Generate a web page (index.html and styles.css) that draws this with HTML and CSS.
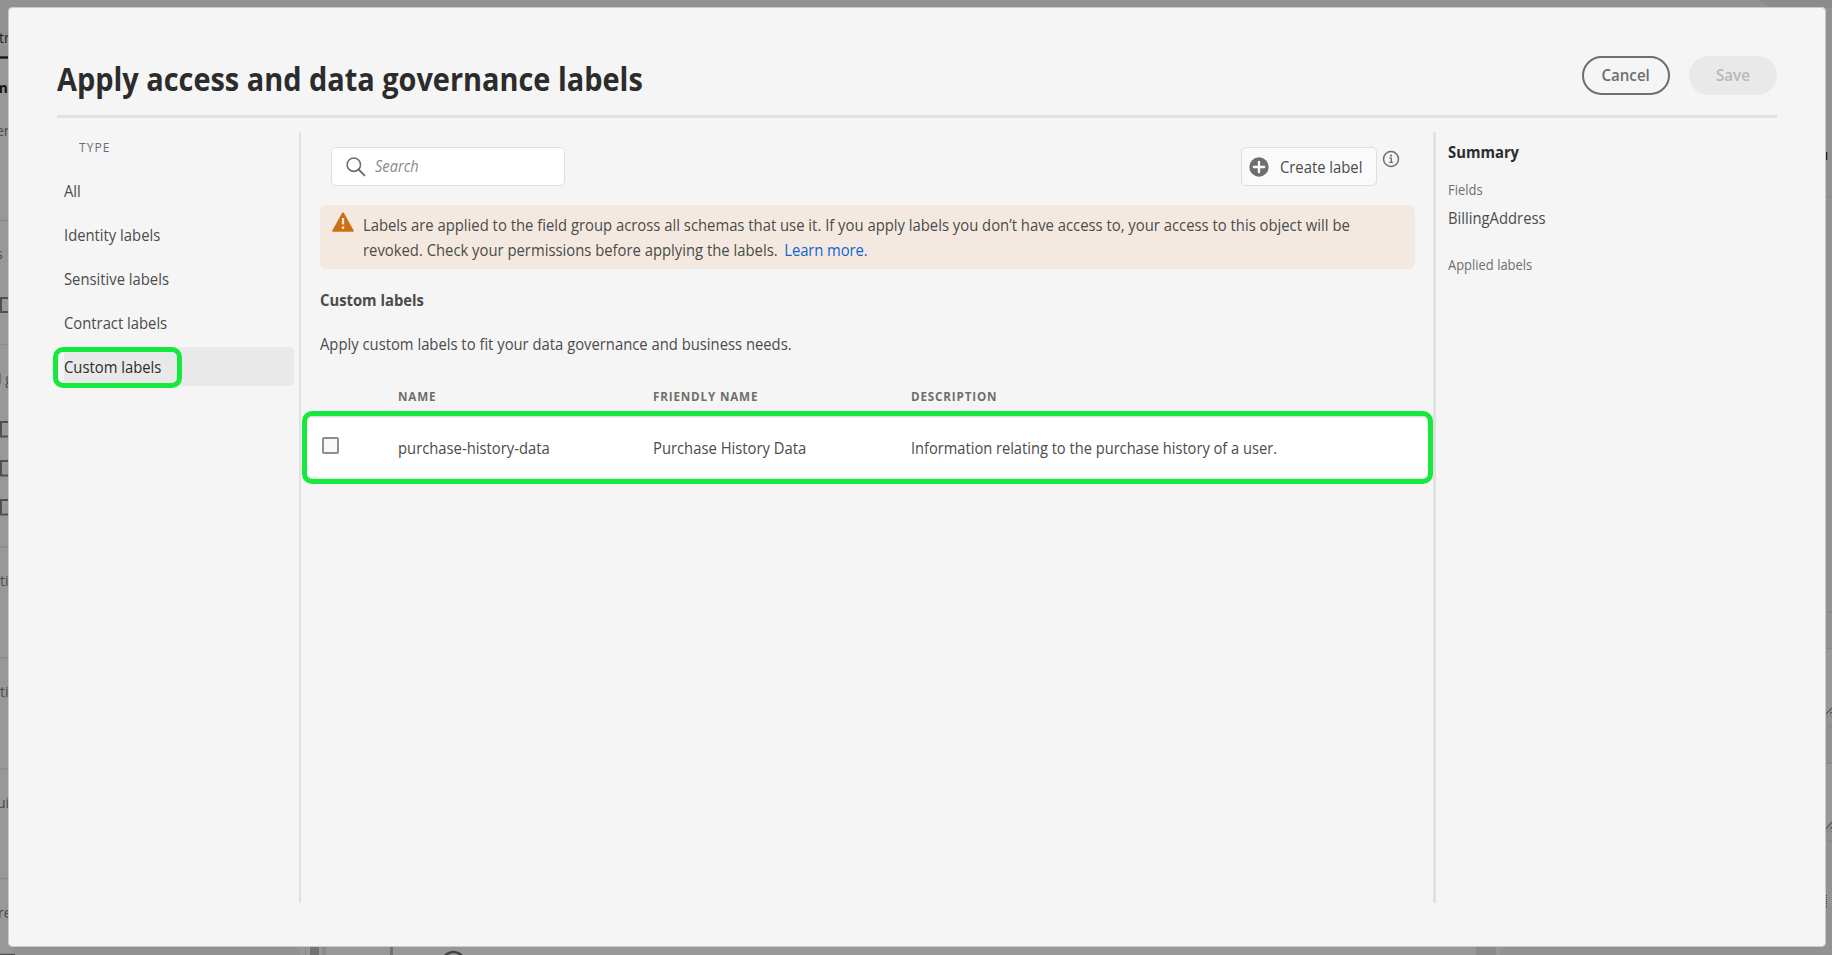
FILE: index.html
```
<!DOCTYPE html>
<html lang="en">
<head>
<meta charset="utf-8">
<title>Apply access and data governance labels</title>
<link rel="stylesheet" href="styles.css">
</head>
<body>
<!-- Dimmed page behind the dialog -->
<svg class="backdrop" width="1832" height="955" viewBox="0 0 1832 955" aria-hidden="true">
  <rect width="1832" height="955" fill="#929292"/>
  <rect y="58" width="12" height="897" fill="#989898"/>
  <rect y="940" x="300" width="1200" height="15" fill="#989898"/>
  <path d="M1760 0Q1768 8 1782 8H1832V0Z" fill="#8b8b8b"/>
  <path d="M0 57.5H12" stroke="#181818" stroke-width="2.4"/>
  <path d="M0 220.5H12M0 344.5H12M0 547H12M0 658H12M0 769H12M0 878.5H12" stroke="#8b8b8b" stroke-width="1.5"/>
  <path d="M12 298H1V312H12M12 422H1V436.500H12M12 461H1V475.500H12M12 500H1V514.500H12" fill="none" stroke="#505050" stroke-width="2"/>
  <path d="M0 954.500H15" stroke="#505050" stroke-width="1.500"/>
  <path d="M1824 196.500H1832M1824 612H1832M1824 648.500H1832M1824 716H1832M1824 726.500H1832M1824 763H1832M1824 831H1832M1824 841H1832" stroke="#888" stroke-width="1.500"/>
  <path d="M1824 649.500H1832V715H1824ZM1824 764H1832V830H1824Z" fill="#989898"/>
  <path d="M1826 714L1832 708M1830 714L1832 712M1826 829L1832 822M1830 829L1832 827" stroke="#555" stroke-width="1.200"/>
  <path d="M1826.500 152V160" stroke="#222" stroke-width="1.500"/>
  <path d="M1826.500 895V909" stroke="#444" stroke-width="1" stroke-dasharray="1 1"/>
  <path d="M305.500 946V955" stroke="#888"/>
  <rect x="310" y="946" width="9" height="9" fill="#727272"/>
  <rect x="322" y="946" width="4" height="9" fill="#8b8b8b"/>
  <rect x="390" y="946" width="3" height="9" fill="#727272"/>
  <rect x="1476" y="946" width="20" height="9" fill="#8b8b8b"/>
  <circle cx="453.500" cy="963" r="11" fill="none" stroke="#444" stroke-width="2.500"/>
  <g class="backdrop-text">
    <text x="-1" y="43" fill="#222">tr</text>
    <text x="-6" y="93" fill="#111" font-weight="700">m</text>
    <text x="-4" y="136">en</text>
    <text x="-4" y="259">s</text>
    <text x="-2" y="384">l g</text>
    <text x="0" y="586">ti</text>
    <text x="0" y="697">ti</text>
    <text x="-3" y="808">ui</text>
    <text x="-2" y="918">re</text>
  </g>
</svg>

<div class="dialog" role="dialog">
  <header class="dialog-header">
    <h1 class="title">Apply access and data governance labels</h1>
    <div class="actions">
      <button class="pill pill-outline"><span>Cancel</span></button>
      <button class="pill pill-disabled" disabled><span>Save</span></button>
    </div>
  </header>

  <div class="columns">
    <nav class="types">
      <div class="types-heading"><span class="narrow">TYPE</span></div>
      <a class="type"><span class="narrow">All</span></a>
      <a class="type"><span class="narrow">Identity labels</span></a>
      <a class="type"><span class="narrow">Sensitive labels</span></a>
      <a class="type"><span class="narrow">Contract labels</span></a>
      <a class="type selected"><span class="narrow">Custom labels</span><i class="marker"></i></a>
    </nav>

    <main class="content">
      <div class="toolbar">
        <div class="search">
          <svg width="20" height="20" viewBox="0 0 20 20" fill="none" stroke="#6e6e6e" stroke-width="1.600"><circle cx="7.800" cy="7.700" r="6.700"/><path d="M12.600 12.500L18.500 18.400" stroke-width="1.900" stroke-linecap="round"/></svg>
          <span class="narrow">Search</span>
        </div>
        <button class="create">
          <svg width="20" height="20" viewBox="0 0 20 20"><circle cx="10" cy="10" r="9.700" fill="#6e6e6e"/><path d="M10 4.800V15.200M4.800 10H15.200" stroke="#fafafa" stroke-width="2.300" stroke-linecap="round"/></svg>
          <span class="narrow">Create label</span>
        </button>
        <svg class="info" width="18" height="18" viewBox="0 0 18 18"><circle cx="9" cy="9" r="7.500" fill="none" stroke="#6e6e6e" stroke-width="1.500"/><circle cx="9" cy="5.600" r="1.100" fill="#6e6e6e"/><path d="M7.300 8.200H9.300V12.300M7.200 12.400H10.900" fill="none" stroke="#6e6e6e" stroke-width="1.300"/></svg>
      </div>

      <div class="notice">
        <svg width="22" height="20" viewBox="0 0 22 20"><path d="M10.200 .8Q11 -.3 11.800 .8L21.700 18.600Q22.100 19.600 21 19.700H1Q-.1 19.600 .3 18.600Z" fill="#cb6f10"/><path d="M11 6V12.400" stroke="#f4e9e0" stroke-width="2.300"/><path d="M11 14.500V16.900" stroke="#f4e9e0" stroke-width="2.400"/></svg>
        <p class="narrow">Labels are applied to the field group across all schemas that use it. If you apply labels you don’t have access to, your access to this object will be<br>revoked. Check your permissions before applying the labels. <a class="link">Learn more.</a></p>
      </div>

      <h2 class="narrow heading">Custom labels</h2>
      <p class="narrow intro">Apply custom labels to fit your data governance and business needs.</p>

      <div class="table">
        <div class="row head">
          <span></span><span class="narrow">NAME</span><span class="narrow">FRIENDLY NAME</span><span class="narrow">DESCRIPTION</span>
        </div>
        <div class="row body">
          <span class="checkbox"></span><span class="narrow">purchase-history-data</span><span class="narrow">Purchase History Data</span><span class="narrow description">Information relating to the purchase history of a user.</span>
        </div>
      </div>
    </main>

    <aside class="summary">
      <h2 class="narrow">Summary</h2>
      <div class="narrow label">Fields</div>
      <div class="narrow value">BillingAddress</div>
      <div class="narrow label">Applied labels</div>
    </aside>
  </div>
</div>
</body>
</html>
```
FILE: styles.css
```
* { box-sizing: border-box; }
body {
  margin: 0;
  height: 955px;
  padding: 7px 6px 8px 8px;
  overflow: hidden;
  background: #929292;
  color: #4b4b4b;
  font: 16px/24px "Open Sans", "Noto Sans", sans-serif;
}
h1, h2, p { margin: 0; font-size: 16px; }
svg { display: block; flex: none; }
button { font: inherit; color: inherit; margin: 0; }

.backdrop { position: absolute; left: 0; top: 0; }
.backdrop-text { font-size: 14px; fill: #4a4a4a; opacity: .99; }

/* Slightly condensed text setting */
.narrow {
  display: block;
  white-space: nowrap;
  transform: scaleX(.925);
  transform-origin: 0 50%;
}

.dialog {
  position: relative;
  height: 940px;
  padding: 49px 49px 0;
  background: #f5f5f5;
  border-radius: 5px;
  box-shadow: inset 0 0 0 1px #cacaca;
}
.dialog-header {
  display: flex;
  justify-content: space-between;
  align-items: flex-start;
  height: 62px;
  border-bottom: 3px solid #e1e1e1;
}
.title {
  font-size: 32px;
  line-height: 45px;
  color: #2c2c2c;
  white-space: nowrap;
  transform: scaleX(.903);
  transform-origin: 0 50%;
}
.actions { display: flex; gap: 19px; }
.pill {
  width: 88px;
  height: 39px;
  padding: 0 0 1px;
  border: 2px solid transparent;
  border-radius: 20px;
  background: none;
  font-size: 16px;
  font-weight: 600;
  line-height: 34px;
}
.pill span { display: inline-block; transform: scaleX(.945); }
.pill-outline { border-color: #6e6e6e; color: #6e6e6e; }
.pill-disabled { background: #e9e9e9; color: #b8b8b8; }

.columns { display: flex; height: 771px; margin-top: 14px; }

.types { width: 244px; padding: 5px 5px 0 7px; border-right: 2px solid #e1e1e1; }
.types-heading {
  padding-left: 15px;
  margin-bottom: 14px;
  font-size: 13px;
  line-height: 20px;
  letter-spacing: 1.100px;
  color: #6e6e6e;
}
.type { display: block; position: relative; height: 39px; margin-bottom: 5px; line-height: 41px; border-radius: 0 5px 5px 0; }
.type.selected { background: #e9e9e9; color: #2c2c2c; }
.marker {
  position: absolute;
  left: -11px;
  top: 0;
  width: 129px;
  height: 41px;
  border: 5px solid #17e83e;
  border-radius: 10px;
}

.content { width: 1132px; padding: 15px 18px 0 18.500px; }
.toolbar { display: flex; height: 39px; padding-left: 11.500px; }
.search {
  display: flex;
  align-items: center;
  gap: 9px;
  width: 234px;
  padding: 0 14px;
  background: #fff;
  border: 1px solid #dedede;
  border-radius: 5px;
  color: #8a8a8a;
  font-size: 15.800px;
  font-style: italic;
}
.search .narrow { margin-top: -2px; }
.create {
  display: flex;
  align-items: center;
  gap: 11px;
  width: 136px;
  margin-left: auto;
  padding: 0 7px;
  background: #fafafa;
  border: 1px solid #dedede;
  border-radius: 5px;
}
.info { margin: 3px 15.500px 0 4.500px; }

.notice {
  display: flex;
  gap: 9.500px;
  height: 64px;
  margin-top: 19px;
  padding: 8px 12px;
  background: #f4e9e0;
  border-radius: 6px;
  line-height: 25px;
}
.notice svg { margin-top: -1px; }
.notice .narrow { transform: scaleX(.9265); }
.link { color: #0d66d0; margin-left: 3px; letter-spacing: -.1px; }
.heading { margin-top: 19px; }
.intro { margin-top: 20px; }

.table { margin: 30px -17.500px 0 -17.500px; }
.row { display: grid; grid-template-columns: 96px 255.500px 257.500px 1fr; }
.head {
  padding: 1px 0 4px;
  font-size: 12.600px;
  font-weight: 700;
  line-height: 20px;
  letter-spacing: .9px;
  color: #6e6e6e;
}
.head .narrow, .body .narrow { margin-left: -.5px; }
.body {
  position: relative;
  grid-template-columns: 91px 255.500px 257.500px 1fr;
  align-items: center;
  height: 73px;
  padding-top: 1px;
  border: 5px solid #17e83e;
  border-radius: 10px;
  background: #fff;
  box-shadow: inset 0 1.500px #dedede, inset 0 -1.500px #e4e4e4;
}
.description { transform: scaleX(.915); }
.checkbox {
  width: 17px;
  height: 17px;
  margin: -5px 0 0 15px;
  border: 2px solid #8e8e8e;
  border-radius: 2px;
  background: #f8f8f8;
}

.summary { flex: 1; padding: 8px 0 0 12px; border-left: 3px solid #e1e1e1; }
.summary h2 { color: #2c2c2c; }
.summary .label { margin-top: 16px; font-size: 14px; line-height: 20px; color: #6e6e6e; }
.summary .value { margin-top: 6px; }
.summary .value + .label { margin-top: 25px; }
```
